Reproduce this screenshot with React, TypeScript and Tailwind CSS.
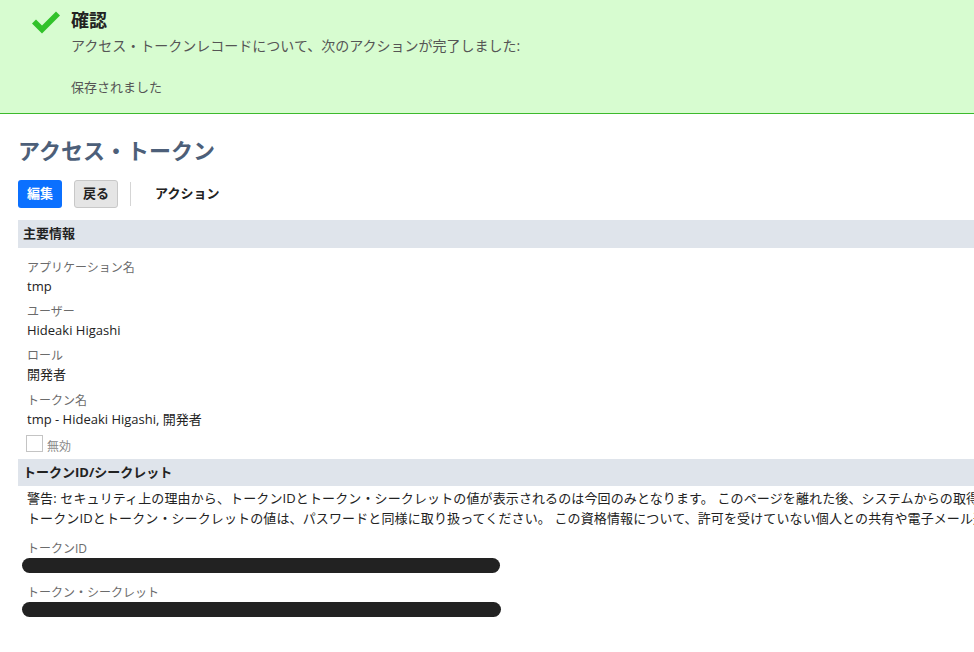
import React from "react";

const font = { fontFamily: '"Open Sans", "Noto Sans CJK JP", sans-serif' };

function Field({ label, value }: { label: string; value: string }) {
  return (
    <div className="pl-[9px]">
      <div className="text-[12px] text-[#6b6b6b] leading-[19px]">{label}</div>
      <div className="text-[13px] text-[#222] leading-[19px]">{value}</div>
    </div>
  );
}

export default function App() {
  return (
    <div className="w-[974px] h-[652px] overflow-hidden bg-white" style={font}>
      <div className="h-[114px] bg-[#d7fcd0] border-b border-[#3cba2c] flex">
        <div className="pl-[31px] pt-[10px]">
          <svg width="30" height="24" viewBox="0 0 30 24">
            <path d="M1 13.5 L5 9.5 L11 15.5 L25 1.5 L29 5.5 L11 23.5 Z" fill="#31c22a" />
          </svg>
        </div>
        <div className="pl-[10px] pt-[7px]">
          <div className="text-[18px] font-bold text-[#222] leading-[26px]">確認</div>
          <div className="text-[14px] text-[#555] leading-[20px] mt-[3px]">
            アクセス・トークンレコードについて、次のアクションが完了しました:
          </div>
          <div className="text-[13px] text-[#555] leading-[20px] mt-[21px]">保存されました</div>
        </div>
      </div>
      <div className="pl-[18px]">
        <h1 className="text-[22px] font-bold text-[#4d5f79] leading-[30px] mt-[21px]">
          アクセス・トークン
        </h1>
        <div className="flex items-center mt-[15px] h-[28px]">
          <div className="h-[28px] px-[9px] rounded-[3px] bg-[#0b70ff] text-white text-[13px] font-bold flex items-center">
            編集
          </div>
          <div className="ml-[12px] h-[28px] px-[8px] rounded-[3px] bg-[#e5e5e5] border border-[#c8c8c8] text-[#222] text-[13px] font-bold flex items-center">
            戻る
          </div>
          <div className="ml-[12px] w-px h-[24px] bg-[#d5d5d5]" />
          <div className="ml-[24px] text-[13px] font-bold text-[#222]">アクション</div>
        </div>
        <div className="mt-[12px] h-[28px] bg-[#dfe4eb] flex items-center pl-[5px] text-[13px] font-bold text-[#222] w-[1200px]">
          主要情報
        </div>
        <div className="flex flex-col gap-[6px] pt-[10px]">
          <Field label="アプリケーション名" value="tmp" />
          <Field label="ユーザー" value="Hideaki Higashi" />
          <Field label="ロール" value="開発者" />
          <div className="pt-[1px]">
            <Field label="トークン名" value="tmp - Hideaki Higashi, 開発者" />
          </div>
        </div>
        <div className="flex items-start pl-[8px] mt-[6px] h-[17px]">
          <div className="w-[17px] h-[17px] border border-[#c4c4c4] bg-white" />
          <span className="ml-[4px] mt-[3px] text-[12px] leading-[17px] text-[#888]">無効</span>
        </div>
        <div className="mt-[7px] h-[27px] bg-[#dfe4eb] flex items-center pl-[5px] text-[13px] font-bold text-[#222] w-[1200px]">
          トークンID/シークレット
        </div>
        <div className="pl-[9px] pt-[2px] text-[13px] tracking-[0.12px] text-[#222] leading-[20px] whitespace-nowrap">
          <div>警告: セキュリティ上の理由から、トークンIDとトークン・シークレットの値が表示されるのは今回のみとなります。 このページを離れた後、システムからの取得はできません。</div>
          <div>トークンIDとトークン・シークレットの値は、パスワードと同様に取り扱ってください。 この資格情報について、許可を受けていない個人との共有や電子メール送信は行わないでください。</div>
        </div>
        <div className="pl-[9px] mt-[11px] text-[12px] text-[#6b6b6b] leading-[19px]">トークンID</div>
        <div className="ml-[4px] w-[478px] h-[15px] rounded-full bg-[#222]" />
        <div className="pl-[9px] mt-[10px] text-[12px] text-[#6b6b6b] leading-[19px]">トークン・シークレット</div>
        <div className="ml-[4px] w-[479px] h-[15px] rounded-full bg-[#222]" />
      </div>
    </div>
  );
}
